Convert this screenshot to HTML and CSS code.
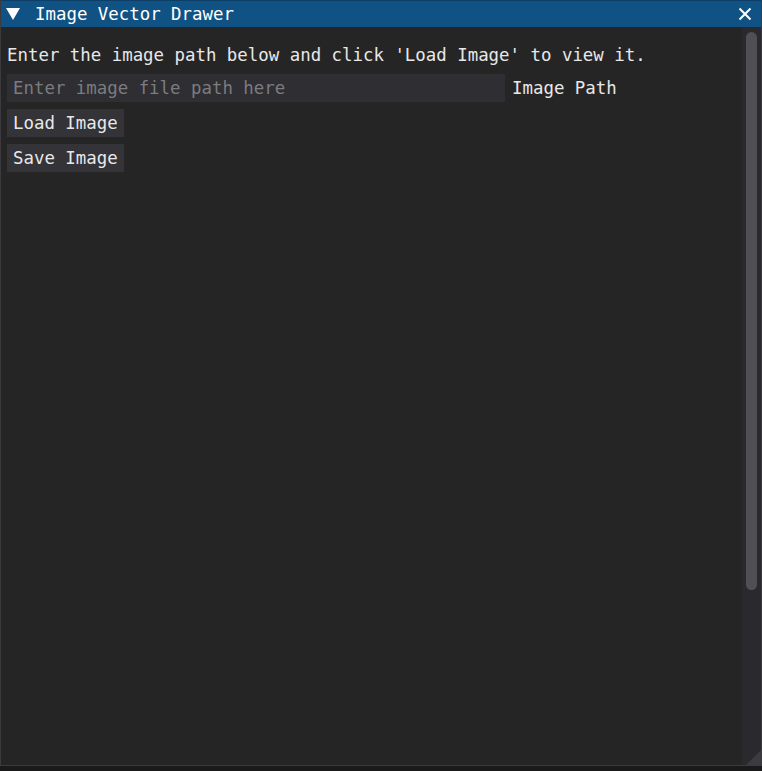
FILE: index.html
```html
<!DOCTYPE html>
<html>
<head>
<meta charset="utf-8">
<link rel="stylesheet" href="styles.css">
</head>
<body>
<div class="window">
  <div class="titlebar">
    <svg class="collapse" width="14" height="12" viewBox="0 0 14 12"><polygon points="0,0 14,0 7,12" fill="#ffffff"/></svg>
    <span class="title">Image Vector Drawer</span>
    <svg class="close" width="14" height="14" viewBox="0 0 14 14"><path d="M1.5 1.5 L12.5 12.5 M12.5 1.5 L1.5 12.5" stroke="#ffffff" stroke-width="2"/></svg>
  </div>
  <div class="body">
    <div class="content">
      <div class="label">Enter the image path below and click 'Load Image' to view it.</div>
      <div class="row">
        <div class="input">Enter image file path here</div>
        <span class="inlabel">Image Path</span>
      </div>
      <div class="button">Load Image</div>
      <div class="button">Save Image</div>
    </div>
    <div class="scrollbar"><div class="grab"></div></div>
    <div class="grip"></div>
  </div>
</div>
</body>
</html>
```
FILE: styles.css
```css
html, body {
  margin: 0;
  padding: 0;
  background: #1a1a1a;
}
body {
  width: 762px;
  height: 771px;
  overflow: hidden;
  font-family: "DejaVu Sans Mono", "Liberation Mono", monospace;
  font-size: 17.4px;
  color: #e8e8e8;
}
.window {
  width: 760px;
  height: 765px;
  border: 1px solid #3a3a3f;
  border-top: none;
  background: #252525;
  display: flex;
  flex-direction: column;
}
.titlebar {
  height: 27px;
  flex: none;
  background: #115284;
  border-top: 1px solid #0c3e66;
  box-sizing: border-box;
  display: flex;
  align-items: center;
  padding-left: 5px;
  padding-right: 9px;
}
.collapse {
  flex: none;
  margin-top: -1px;
}
.title {
  margin-left: 15px;
  flex: 1;
  line-height: 20px;
  color: #ffffff;
}
.close {
  flex: none;
}
.body {
  flex: 1;
  display: flex;
  position: relative;
  min-height: 0;
}
.content {
  flex: 1;
  padding: 18px 0 0 6px;
  display: flex;
  flex-direction: column;
  align-items: flex-start;
}
.label {
  line-height: 20px;
  height: 20px;
  white-space: nowrap;
  margin-bottom: 9px;
}
.row {
  display: flex;
  align-items: center;
  margin-bottom: 7px;
}
.input {
  width: 498px;
  height: 28px;
  line-height: 28px;
  box-sizing: border-box;
  padding-left: 6px;
  background: #2e2e33;
  color: #7c7c80;
  white-space: nowrap;
}
.inlabel {
  margin-left: 7px;
  white-space: nowrap;
}
.button {
  height: 28px;
  line-height: 28px;
  padding: 0 6px;
  background: #333338;
  margin-bottom: 7px;
  white-space: nowrap;
}
.scrollbar {
  width: 19px;
  flex: none;
  background: #2a2a2e;
  padding: 5px 4px 0 4px;
  box-sizing: border-box;
}
.grab {
  height: 558px;
  background: #505054;
  border-radius: 6px;
}
.grip {
  position: absolute;
  right: 0;
  bottom: 0;
  width: 0;
  height: 0;
  border-left: 15px solid transparent;
  border-bottom: 15px solid #3b3b40;
}
```
